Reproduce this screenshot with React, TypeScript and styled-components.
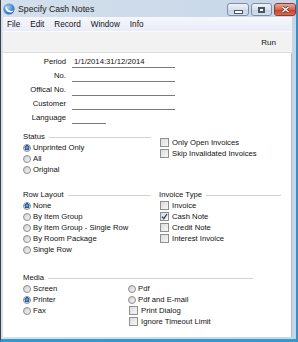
import React from 'react';
import styled, { createGlobalStyle } from 'styled-components';

const GlobalStyle = createGlobalStyle`
  html, body {
    margin: 0;
    padding: 0;
  }
  body {
    width: 298px;
    height: 342px;
    overflow: hidden;
    background: #fff;
    font-family: "Liberation Sans", Arial, sans-serif;
    color: #111;
  }
`;

const Window = styled.div`
  width: 298px;
  height: 342px;
  box-sizing: border-box;
  display: flex;
  flex-direction: column;
  background: linear-gradient(90deg, #d4e0ec, #c6d6e8);
  border-left: 1px solid #3c4046;
  border-right: 2px solid #3a8fc0;
  border-bottom: 3px solid #2e9bd0;
`;

const TitleBar = styled.div`
  height: 17px;
  flex: none;
  display: flex;
  align-items: center;
  padding-left: 2px;
  font-size: 8.7px;
  color: #1a1a1a;
`;

const Title = styled.span`
  margin-left: 3px;
  flex: 1;
`;

const CaptionButtons = styled.div`
  display: flex;
  gap: 2px;
  align-self: flex-start;
  margin-top: 3px;
`;

const CaptionButton = styled.div<{ $close?: boolean; $w: number }>`
  width: ${p => p.$w}px;
  height: 13px;
  box-sizing: border-box;
  border-radius: 3px;
  border: 1px solid ${p => (p.$close ? '#8d3b2e' : '#7d8ea3')};
  background: ${p =>
    p.$close
      ? 'linear-gradient(#e9a897, #d0644f 50%, #c2412b 51%, #d56a52)'
      : 'linear-gradient(#eef3f9, #d6e1ee 50%, #c4d3e5 51%, #d3dfec)'};
  display: flex;
  align-items: center;
  justify-content: center;
`;

const MinGlyph = styled.div`
  width: 7px;
  height: 2px;
  margin-top: 4px;
  background: #fff;
  border: 1px solid #4a5563;
`;

const MaxGlyph = styled.div`
  width: 5px;
  height: 4px;
  border: 1px solid #4a5563;
  background: #fff;
  box-shadow: inset 0 0 0 1px #4a5563;
`;

const Body = styled.div`
  flex: 1;
  display: flex;
  flex-direction: column;
  margin: 0 4px 2px 2px;
  min-height: 0;
`;

const MenuBar = styled.div`
  height: 14px;
  flex: none;
  display: flex;
  align-items: center;
  gap: 10px;
  background: linear-gradient(#f6f7fc, #e9ecf6);
  font-size: 8.2px;
  padding-left: 4px;
`;

const MenuItem = styled.span``;

const Toolbar = styled.div`
  height: 22px;
  flex: none;
  display: flex;
  align-items: center;
  justify-content: flex-end;
  padding-right: 16px;
  background: #f2f2f2;
  border-top: 1px solid #fbfbfb;
  border-bottom: 1px solid #dcdcdc;
  box-sizing: border-box;
  font-size: 8px;
`;

const Content = styled.div`
  flex: 1;
  background: #fff;
  border-right: 1px solid #b4bcc6;
  padding: 2px 0 0 20px;
  font-size: 7.7px;
`;

const Fields = styled.div`
  display: flex;
  flex-direction: column;
  margin-left: -20px;
  margin-bottom: 6px;
`;

const FieldRow = styled.div`
  display: flex;
  height: 14px;
`;

const FieldLabel = styled.div`
  width: 63px;
  margin-right: 6px;
  text-align: right;
  line-height: 14px;
`;

const FieldBox = styled.div<{ $w: number }>`
  width: ${p => p.$w}px;
  height: 12px;
  margin-top: 1px;
  box-sizing: border-box;
  border-bottom: 1px solid #7a7a7a;
  line-height: 11px;
  padding-left: 2px;
`;

const TwoCols = styled.div<{ $gapAfter: number }>`
  display: grid;
  grid-template-columns: 128px 122px;
  column-gap: 8px;
  margin-bottom: ${p => p.$gapAfter}px;
`;

const Column = styled.div<{ $pad?: number }>`
  display: flex;
  flex-direction: column;
  padding-top: ${p => p.$pad || 0}px;
`;

const GroupHeader = styled.div<{ $w?: number }>`
  display: flex;
  align-items: center;
  height: 11px;
  width: ${p => (p.$w ? `${p.$w}px` : 'auto')};
  &::after {
    content: '';
    flex: 1;
    margin: 2px 0 0 4px;
    border-top: 1px solid #d2d2d2;
  }
`;

const Option = styled.div`
  display: flex;
  align-items: center;
  height: 11px;
  white-space: nowrap;
`;

const RadioDot = styled.span<{ $on?: boolean }>`
  width: 8px;
  height: 8px;
  box-sizing: border-box;
  border-radius: 50%;
  border: 1px solid #8c8c8c;
  background: ${p =>
    p.$on
      ? 'radial-gradient(circle at 50% 45%, #7fc0f0 0, #2a6cb8 1.6px, #1d4f8f 2.4px, #dcdcdc 2.6px, #f4f4f4 100%)'
      : 'linear-gradient(135deg, #d0d0d0, #f6f6f6)'};
  margin-right: 2px;
  flex: none;
`;

const CheckBox = styled.span`
  width: 9px;
  height: 9px;
  box-sizing: border-box;
  border: 1px solid #8e8f8f;
  background: linear-gradient(135deg, #dcdcdc, #f7f7f7);
  margin: 0 3px 0 1px;
  flex: none;
  display: flex;
  align-items: center;
  justify-content: center;
`;

const MediaGroup = styled.div`
  display: flex;
  flex-direction: column;
`;

const MediaGrid = styled.div`
  display: grid;
  grid-template-columns: 105px 1fr;
`;

const Radio = ({ label, on }: { label: string; on?: boolean }) => (
  <Option>
    <RadioDot $on={on} />
    {label}
  </Option>
);

const Check = ({ label, on }: { label: string; on?: boolean }) => (
  <Option>
    <CheckBox>
      {on && (
        <svg width="7" height="7" viewBox="0 0 7 7">
          <path d="M1 3.6 L2.8 5.6 L6 1" stroke="#2c3f66" strokeWidth="1.3" fill="none" />
        </svg>
      )}
    </CheckBox>
    {label}
  </Option>
);

const AppIcon = () => (
  <svg width="12" height="12" viewBox="0 0 12 12">
    <defs>
      <radialGradient id="ic" cx="0.4" cy="0.35" r="0.7">
        <stop offset="0" stopColor="#9fd0f6" />
        <stop offset="1" stopColor="#1c5fb0" />
      </radialGradient>
    </defs>
    <circle cx="6" cy="6" r="5.6" fill="url(#ic)" />
    <path d="M3 2.5 C1.6 5 3 9 7 9.4 C9 9.5 10.4 8.4 10.8 7 C9.2 8.2 6.6 8.3 5 6.6 C3.8 5.3 3.6 3.8 3 2.5 Z" fill="#fff" />
  </svg>
);

const fields: { label: string; value?: string; w: number }[] = [
  { label: 'Period', value: '1/1/2014:31/12/2014', w: 103 },
  { label: 'No.', w: 103 },
  { label: 'Offical No.', w: 103 },
  { label: 'Customer', w: 103 },
  { label: 'Language', w: 34 },
];

export default function App() {
  return (
    <>
      <GlobalStyle />
      <Window>
        <TitleBar>
          <AppIcon />
          <Title>Specify Cash Notes</Title>
          <CaptionButtons>
            <CaptionButton $w={22}>
              <MinGlyph />
            </CaptionButton>
            <CaptionButton $w={21}>
              <MaxGlyph />
            </CaptionButton>
            <CaptionButton $w={22} $close>
              <svg width="9" height="7" viewBox="0 0 9 7">
                <path d="M1.5 1 L7.5 6 M7.5 1 L1.5 6" stroke="#5a1a10" strokeWidth="2.6" />
                <path d="M1.5 1 L7.5 6 M7.5 1 L1.5 6" stroke="#fff" strokeWidth="1.6" />
              </svg>
            </CaptionButton>
          </CaptionButtons>
        </TitleBar>
        <Body>
          <MenuBar>
            <MenuItem>File</MenuItem>
            <MenuItem>Edit</MenuItem>
            <MenuItem>Record</MenuItem>
            <MenuItem>Window</MenuItem>
            <MenuItem>Info</MenuItem>
          </MenuBar>
          <Toolbar>Run</Toolbar>
          <Content>
            <Fields>
              {fields.map(f => (
                <FieldRow key={f.label}>
                  <FieldLabel>{f.label}</FieldLabel>
                  <FieldBox $w={f.w}>{f.value}</FieldBox>
                </FieldRow>
              ))}
            </Fields>

            <TwoCols $gapAfter={14}>
              <Column>
                <GroupHeader>Status</GroupHeader>
                <Radio label="Unprinted Only" on />
                <Radio label="All" />
                <Radio label="Original" />
              </Column>
              <Column $pad={6}>
                <Check label="Only Open Invoices" />
                <Check label="Skip Invalidated Invoices" />
              </Column>
            </TwoCols>

            <TwoCols $gapAfter={17}>
              <Column>
                <GroupHeader>Row Layout</GroupHeader>
                <Radio label="None" on />
                <Radio label="By Item Group" />
                <Radio label="By Item Group - Single Row" />
                <Radio label="By Room Package" />
                <Radio label="Single Row" />
              </Column>
              <Column>
                <GroupHeader>Invoice Type</GroupHeader>
                <Check label="Invoice" />
                <Check label="Cash Note" on />
                <Check label="Credit Note" />
                <Check label="Interest Invoice" />
              </Column>
            </TwoCols>

            <MediaGroup>
              <GroupHeader $w={230}>Media</GroupHeader>
              <MediaGrid>
                <Column>
                  <Radio label="Screen" />
                  <Radio label="Printer" on />
                  <Radio label="Fax" />
                </Column>
                <Column>
                  <Radio label="Pdf" />
                  <Radio label="Pdf and E-mail" />
                  <Check label="Print Dialog" />
                  <Check label="Ignore Timeout Limit" />
                </Column>
              </MediaGrid>
            </MediaGroup>
          </Content>
        </Body>
      </Window>
    </>
  );
}
